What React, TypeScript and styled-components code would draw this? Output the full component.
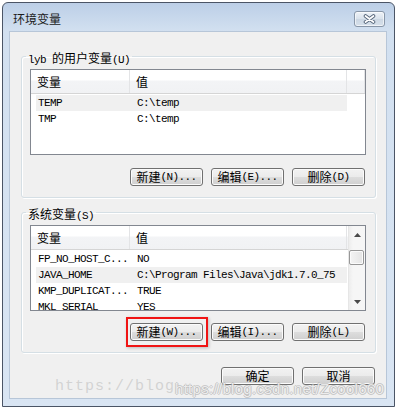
import React from 'react';
import styled, { createGlobalStyle } from 'styled-components';

const HAN = `"Noto Sans CJK SC", "Noto Sans", sans-serif`;
const MONO = `"Liberation Mono", "DejaVu Sans Mono", monospace`;

const GlobalStyle = createGlobalStyle`
  html, body {
    margin: 0;
    padding: 0;
    background: #ffffff;
  }
  body {
    width: 396px;
    height: 407px;
    overflow: hidden;
    font-family: ${HAN};
  }
`;

const Window = styled.div`
  box-sizing: border-box;
  width: 393px;
  height: 405px;
  margin: 2px 0 0 2px;
  padding: 0 7px 7px 6px;
  border: 1px solid #4b5566;
  border-radius: 6px 6px 0 0;
  background: linear-gradient(#bccfe7, #d2e0f0 28px, #d9e5f3);
  display: flex;
  flex-direction: column;
`;

const TitleBar = styled.div`
  box-sizing: border-box;
  height: 28px;
  padding: 4px 2px 0 4px;
  display: flex;
  align-items: center;
  justify-content: space-between;
`;

const Title = styled.span`
  font-family: ${HAN};
  font-size: 12px;
  line-height: 14px;
  color: #1b1b1b;
`;

const CloseButton = styled.div`
  box-sizing: border-box;
  width: 31px;
  height: 16px;
  border: 1px solid #8896a8;
  border-radius: 3px;
  background: linear-gradient(#eef2f7, #d9e2ec 50%, #ccd7e3 51%, #d6e0eb);
  box-shadow: inset 0 0 0 1px rgba(255, 255, 255, 0.6);
  display: flex;
  align-items: center;
  justify-content: center;
`;

const Client = styled.div`
  flex: 1;
  box-sizing: border-box;
  position: relative;
  border: 1px solid #b7c6d8;
  background: #f0f0f0;
  padding: 17px 10px 0 11px;
  display: flex;
  flex-direction: column;
`;

const GroupBox = styled.fieldset<{ $top?: number }>`
  margin: ${(p) => p.$top ?? 0}px 0 0 0;
  padding: 6px 9px 11px 8px;
  min-width: 0;
  border: 1px solid #d5dfe5;
  border-radius: 3px;
  box-shadow: inset 1px 1px 0 #ffffff, 1px 1px 0 #ffffff;
`;

const Legend = styled.legend`
  margin-left: -4px;
  padding: 0 2px;
  height: 14px;
  line-height: 14px;
  color: #000;
`;

const ListView = styled.div`
  box-sizing: border-box;
  height: 86px;
  border: 1px solid #828790;
  background: #ffffff;
  display: flex;
  overflow: hidden;
`;

const ListBody = styled.div`
  flex: 1;
  min-width: 0;
  overflow: hidden;
`;

const HeaderRow = styled.div`
  box-sizing: border-box;
  height: 24px;
  display: grid;
  grid-template-columns: 99px 217px 1fr;
  border-bottom: 1px solid #d5d5d5;
  background: linear-gradient(#ffffff 0, #ffffff 10px, #f3f4f6 11px, #f1f2f4);
`;

const HeaderCell = styled.div`
  padding-left: 6px;
  border-right: 1px solid #e3e4e6;
  display: flex;
  align-items: center;
  font-family: ${HAN};
  font-size: 12px;
  color: #000;
`;

const Rows = styled.div`
  padding-top: 1px;
`;

const Row = styled.div<{ $selected?: boolean }>`
  width: 311px;
  height: 16px;
  margin-left: 5px;
  display: grid;
  grid-template-columns: 94px 217px;
  background: ${(p) => (p.$selected ? '#f0f0f0' : 'transparent')};
  font-family: ${MONO};
  font-size: 11px;
  letter-spacing: -0.6px;
  line-height: 16px;
  color: #000;
  white-space: nowrap;
`;

const NameCell = styled.span`
  padding-left: 2px;
  overflow: hidden;
`;

const ValueCell = styled.span`
  padding-left: 7px;
  overflow: hidden;
`;

const ScrollBar = styled.div`
  box-sizing: border-box;
  width: 17px;
  flex: none;
  display: flex;
  flex-direction: column;
  border-left: 1px solid #e6e6e6;
  background: linear-gradient(90deg, #ededed, #f6f6f6 4px, #f6f6f6);
`;

const ArrowButton = styled.div`
  height: 17px;
  flex: none;
  display: flex;
  align-items: center;
  justify-content: center;
`;

const Track = styled.div`
  flex: 1;
`;

const Thumb = styled.div`
  box-sizing: border-box;
  height: 15px;
  margin: 7px 1px 0 0;
  border: 1px solid #979797;
  border-radius: 2px;
  background: linear-gradient(90deg, #f4f4f4, #e4e4e4);
  box-shadow: inset 0 0 0 1px #fbfbfb;
`;

const ButtonRow = styled.div<{ $top: number }>`
  margin-top: ${(p) => p.$top}px;
  padding-right: 1px;
  display: flex;
  justify-content: flex-end;
  gap: 8px;
`;

const Button = styled.div`
  box-sizing: border-box;
  width: 73px;
  height: 18px;
  border: 1px solid #707070;
  border-radius: 3px;
  background: linear-gradient(#f2f2f2 0%, #ebebeb 50%, #dddddd 51%, #cfcfcf 100%);
  box-shadow: inset 0 0 0 1px #fbfbfb;
  display: flex;
  align-items: center;
  justify-content: center;
  line-height: 14px;
  color: #000;
  white-space: nowrap;
`;

const Marked = styled.div`
  position: relative;
  display: flex;
  &::after {
    content: '';
    position: absolute;
    top: -6px;
    left: -4px;
    right: -5px;
    bottom: -6px;
    border: 2px solid #f01414;
    box-shadow: 1px 1px 3px rgba(0, 0, 0, 0.22);
    pointer-events: none;
  }
`;

const Han = styled.span`
  font-family: ${HAN};
  font-size: 12px;
  letter-spacing: 0;
`;

const Latin = styled.span`
  font-family: ${MONO};
  font-size: 11px;
  letter-spacing: -0.6px;
`;

const WatermarkBig = styled.span`
  position: absolute;
  left: 45px;
  top: 347px;
  font-family: ${MONO};
  font-size: 15px;
  line-height: 15px;
  letter-spacing: 1px;
  color: rgba(190, 190, 190, 0.6);
  pointer-events: none;
  white-space: nowrap;
`;

const WatermarkSmall = styled.span`
  position: absolute;
  left: 165px;
  top: 349px;
  font-family: "Liberation Sans", Arial, sans-serif;
  font-size: 15px;
  line-height: 15px;
  letter-spacing: 0.3px;
  color: rgba(255, 255, 255, 0.75);
  text-shadow: 1px 0 0 rgba(170, 170, 170, 0.55), -1px 0 0 rgba(170, 170, 170, 0.55),
    0 1px 0 rgba(170, 170, 170, 0.55), 0 -1px 0 rgba(170, 170, 170, 0.55);
  pointer-events: none;
  white-space: nowrap;
`;

const Txt: React.FC<{ children: string }> = ({ children }) => (
  <>
    {children
      .split(/([\u3400-\u9fff]+)/)
      .filter(Boolean)
      .map((part, i) =>
        /[\u3400-\u9fff]/.test(part) ? <Han key={i}>{part}</Han> : <Latin key={i}>{part}</Latin>
      )}
  </>
);

type Variable = { name: string; value: string; selected?: boolean };

const userVars: Variable[] = [
  { name: 'TEMP', value: 'C:\\temp', selected: true },
  { name: 'TMP', value: 'C:\\temp' },
];

const systemVars: Variable[] = [
  { name: 'FP_NO_HOST_C...', value: 'NO' },
  { name: 'JAVA_HOME', value: 'C:\\Program Files\\Java\\jdk1.7.0_75', selected: true },
  { name: 'KMP_DUPLICAT...', value: 'TRUE' },
  { name: 'MKL_SERIAL', value: 'YES' },
];

const Arrow: React.FC<{ up?: boolean }> = ({ up }) => (
  <svg width="7" height="4" viewBox="0 0 7 4">
    <path d={up ? 'M0 4 L3.5 0 L7 4 Z' : 'M0 0 L7 0 L3.5 4 Z'} fill="#4a4a4a" />
  </svg>
);

const VarList: React.FC<{ items: Variable[]; scroll?: boolean }> = ({ items, scroll }) => (
  <ListView>
    <ListBody>
      <HeaderRow>
        <HeaderCell>变量</HeaderCell>
        <HeaderCell>值</HeaderCell>
        <HeaderCell />
      </HeaderRow>
      <Rows>
        {items.map((v) => (
          <Row key={v.name} $selected={v.selected}>
            <NameCell>{v.name}</NameCell>
            <ValueCell>{v.value}</ValueCell>
          </Row>
        ))}
      </Rows>
    </ListBody>
    {scroll && (
      <ScrollBar>
        <ArrowButton>
          <Arrow up />
        </ArrowButton>
        <Track>
          <Thumb />
        </Track>
        <ArrowButton>
          <Arrow />
        </ArrowButton>
      </ScrollBar>
    )}
  </ListView>
);

const App: React.FC = () => {
  return (
    <>
      <GlobalStyle />
      <Window>
        <TitleBar>
          <Title>环境变量</Title>
          <CloseButton>
            <svg width="13" height="10" viewBox="0 0 13 10">
              <path d="M2.5 2 L10.5 8 M10.5 2 L2.5 8" stroke="#55657a" strokeWidth="3.6" strokeLinecap="round" />
              <path d="M2.5 2 L10.5 8 M10.5 2 L2.5 8" stroke="#ffffff" strokeWidth="1.8" strokeLinecap="round" />
            </svg>
          </CloseButton>
        </TitleBar>
        <Client>
          <GroupBox>
            <Legend>
              <Txt>lyb 的用户变量(U)</Txt>
            </Legend>
            <VarList items={userVars} />
            <ButtonRow $top={13}>
              <Button>
                <Txt>新建(N)...</Txt>
              </Button>
              <Button>
                <Txt>编辑(E)...</Txt>
              </Button>
              <Button>
                <Txt>删除(D)</Txt>
              </Button>
            </ButtonRow>
          </GroupBox>
          <GroupBox $top={7}>
            <Legend>
              <Txt>系统变量(S)</Txt>
            </Legend>
            <VarList items={systemVars} scroll />
            <ButtonRow $top={12}>
              <Marked>
                <Button>
                  <Txt>新建(W)...</Txt>
                </Button>
              </Marked>
              <Button>
                <Txt>编辑(I)...</Txt>
              </Button>
              <Button>
                <Txt>删除(L)</Txt>
              </Button>
            </ButtonRow>
          </GroupBox>
          <ButtonRow $top={14}>
            <Button>
              <Han>确定</Han>
            </Button>
            <Button>
              <Han>取消</Han>
            </Button>
          </ButtonRow>
          <WatermarkBig>https://blog</WatermarkBig>
          <WatermarkSmall>https://blog.csdn.net/Zcool660</WatermarkSmall>
        </Client>
      </Window>
    </>
  );
};

export default App;
